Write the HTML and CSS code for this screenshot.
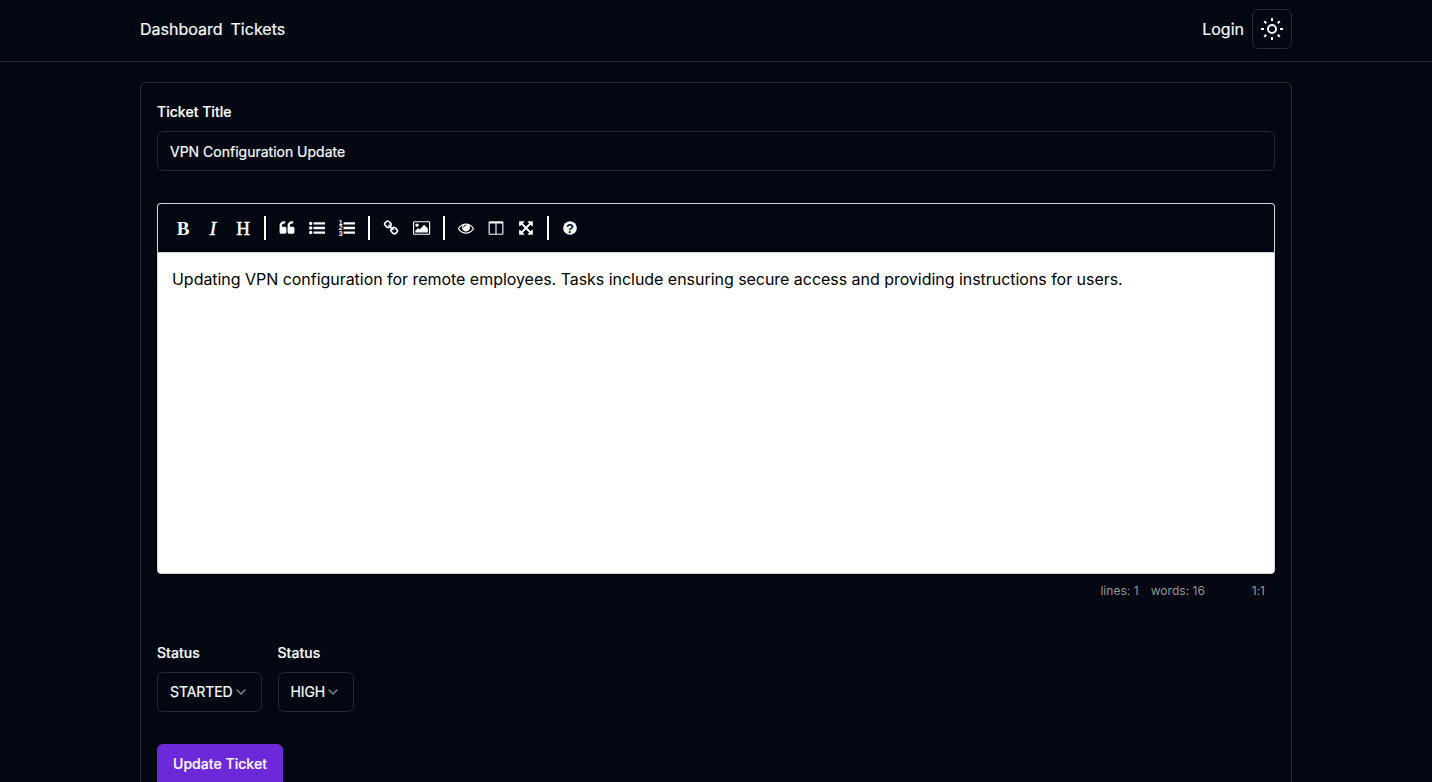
FILE: index.html
```html
<!DOCTYPE html>
<html lang="en">
<head>
<meta charset="utf-8">
<title>Edit Ticket</title>
<link rel="stylesheet" href="styles.css">
</head>
<body>
<nav class="navbar">
  <div class="nav-inner">
    <div class="nav-links"><a>Dashboard</a><a>Tickets</a></div>
    <div class="nav-links">
      <a>Login</a>
      <button class="theme-toggle" aria-label="Toggle theme">
        <svg width="24" height="24" viewBox="0 0 24 24" fill="none" stroke="currentColor" stroke-width="2"><circle cx="12" cy="12" r="4"/><path d="M12 1v3M12 20v3M1 12h3M20 12h3M4.2 4.2l2.1 2.1M17.7 17.7l2.1 2.1M4.2 19.8l2.1-2.1M17.7 6.3l2.1-2.1"/></svg>
      </button>
    </div>
  </div>
</nav>
<main class="card">
  <label class="label">Ticket Title</label>
  <input class="input" value="VPN Configuration Update">
  <section class="editor">
    <div class="toolbar">
      <button class="tool letter bold">B</button>
      <button class="tool letter italic">I</button>
      <button class="tool letter">H</button>
      <i class="separator"></i>
      <button class="tool"><svg viewBox="0 0 1792 1792"><path d="M832 960v384q0 80-56 136t-136 56h-384q-80 0-136-56t-56-136v-704q0-104 40.500-198.500t109.500-163.500 163.500-109.500 198.500-40.500h64q26 0 45 19t19 45v128q0 26-19 45t-45 19h-64q-106 0-181 75t-75 181v32q0 40 28 68t68 28h224q80 0 136 56t56 136zm896 0v384q0 80-56 136t-136 56h-384q-80 0-136-56t-56-136v-704q0-104 40.500-198.500t109.500-163.500 163.500-109.500 198.500-40.500h64q26 0 45 19t19 45v128q0 26-19 45t-45 19h-64q-106 0-181 75t-75 181v32q0 40 28 68t68 28h224q80 0 136 56t56 136z"/></svg></button>
      <button class="tool"><svg viewBox="0 0 1792 1792"><circle cx="192" cy="384" r="192"/><circle cx="192" cy="896" r="192"/><circle cx="192" cy="1408" r="192"/><rect x="512" y="256" width="1280" height="256" rx="32"/><rect x="512" y="768" width="1280" height="256" rx="32"/><rect x="512" y="1280" width="1280" height="256" rx="32"/></svg></button>
      <button class="tool"><svg viewBox="0 0 1792 1792"><text class="list-digit" x="-20" y="520">1</text><text class="list-digit" x="-20" y="1160">2</text><text class="list-digit" x="-20" y="1790">3</text><rect x="512" y="256" width="1280" height="256" rx="32"/><rect x="512" y="768" width="1280" height="256" rx="32"/><rect x="512" y="1280" width="1280" height="256" rx="32"/></svg></button>
      <i class="separator"></i>
      <button class="tool"><svg viewBox="0 0 1792 1792"><path d="M1520 1216q0-40-28-68l-208-208q-28-28-68-28-42 0-72 32 3 3 19 18.500t21.500 21.500 15 19 13 25.500 3.500 27.500q0 40-28 68t-68 28q-15 0-27.500-3.500t-25.500-13-19-15-21.500-21.500-18.500-19q-33 31-33 73 0 40 28 68l206 207q27 27 68 27 40 0 68-26l147-146q28-28 28-67zm-703-705q0-40-28-68l-206-207q-28-28-68-28-39 0-68 27l-147 146q-28 28-28 67 0 40 28 68l208 208q27 27 68 27 42 0 72-31-3-3-19-18.500t-21.500-21.500-15-19-13-25.500-3.500-27.500q0-40 28-68t68-28q15 0 27.500 3.500t25.500 13 19 15 21.500 21.500 18.500 19q33-31 33-73zm895 705q0 120-85 203l-147 146q-83 83-203 83-121 0-204-85l-206-207q-83-83-83-203 0-123 88-209l-88-88q-86 88-208 88-120 0-204-84l-208-208q-84-84-84-204t85-203l147-146q83-83 203-83 121 0 204 85l206 207q83 83 83 203 0 123-88 209l88 88q86-88 208-88 120 0 204 84l208 208q84 84 84 204z"/></svg></button>
      <button class="tool wide"><svg viewBox="-64 0 1920 1792"><path d="M576 576q0 80-56 136t-136 56-136-56-56-136 56-136 136-56 136 56 56 136zm1024 384v448h-1408v-192l320-320 160 160 512-512zm96-704h-1600q-13 0-22.500 9.500t-9.500 22.500v1216q0 13 9.500 22.500t22.500 9.500h1600q13 0 22.500-9.500t9.500-22.500v-1216q0-13-9.500-22.500t-22.500-9.500zm160 32v1216q0 66-47 113t-113 47h-1600q-66 0-113-47t-47-113v-1216q0-66 47-113t113-47h1600q66 0 113 47t47 113z"/></svg></button>
      <i class="separator"></i>
      <button class="tool"><svg viewBox="0 0 1792 1792"><path d="M1664 960q-152-236-381-353 61 104 61 225 0 185-131.500 316.500t-316.500 131.500-316.500-131.500-131.500-316.500q0-121 61-225-229 117-381 353 133 205 333.500 326.500t434.500 121.500 434.500-121.500 333.500-326.500zm-720-384q0-20-14-34t-34-14q-125 0-214.500 89.500t-89.500 214.500q0 20 14 34t34 14 34-14 14-34q0-86 61-147t147-61q20 0 34-14t14-34zm848 384q0 34-20 69-140 230-376.500 368.500t-499.500 138.500-499.500-139-376.500-368q-20-35-20-69t20-69q140-229 376.500-368t499.500-139 499.500 139 376.500 368q20 35 20 69z"/></svg></button>
      <button class="tool"><svg viewBox="0 0 1792 1792"><path d="M224 1536h608v-1152h-640v1120q0 13 9.500 22.500t22.500 9.500zm1376-32v-1120h-640v1152h608q13 0 22.500-9.500t9.500-22.500zm128-1216v1216q0 66-47 113t-113 47h-1344q-66 0-113-47t-47-113v-1216q0-66 47-113t113-47h1344q66 0 113 47t47 113z"/></svg></button>
      <button class="tool"><svg viewBox="0 0 1792 1792"><path d="M1411 541l-355 355 355 355 144-144q29-31 70-14 39 17 39 59v448q0 26-19 45t-45 19h-448q-42 0-59-40-17-39 14-69l144-144-355-355-355 355 144 144q31 30 14 69-17 40-59 40h-448q-26 0-45-19t-19-45v-448q0-42 40-59 39-17 69 14l144 144 355-355-355-355-144 144q-19 19-45 19-12 0-24-5-40-17-40-59v-448q0-26 19-45t45-19h448q42 0 59 40 17 39-14 69l-144 144 355 355 355-355-144-144q-31-30-14-69 17-40 59-40h448q26 0 45 19t19 45v448q0 42-39 59-13 5-25 5-26 0-45-19z"/></svg></button>
      <i class="separator"></i>
      <button class="tool"><svg viewBox="0 0 1792 1792"><circle cx="896" cy="896" r="768"/><text class="help-mark" x="896" y="1400">?</text></svg></button>
    </div>
    <div class="document">Updating VPN configuration for remote employees. Tasks include ensuring secure access and providing instructions for users.</div>
    <div class="statusbar"><span>lines: 1</span><span>words: 16</span><span class="cursor-pos">1:1</span></div>
  </section>
  <div class="selects">
    <div><label class="label">Status</label>
      <button class="select">STARTED<svg width="16" height="16" viewBox="0 0 24 24"><path d="m6 9 6 6 6-6"/></svg></button></div>
    <div><label class="label">Status</label>
      <button class="select">HIGH<svg width="16" height="16" viewBox="0 0 24 24"><path d="m6 9 6 6 6-6"/></svg></button></div>
  </div>
  <button class="submit">Update Ticket</button>
</main>
</body>
</html>
```
FILE: styles.css
```css
* { box-sizing: border-box; }
html { overflow: hidden; }
body {
  margin: 0;
  height: 782px;
  overflow: hidden;
  background: #030711;
  color: #f9fafb;
  font: 16px/24px Inter, sans-serif;
}
button, input { font: inherit; color: inherit; margin: 0; }
.navbar { height: 62px; border-bottom: 1px solid #1f2937; }
.nav-inner {
  width: 1152px;
  margin: 0 auto;
  padding-top: 9px;
  display: flex;
  justify-content: space-between;
}
.nav-links { display: flex; align-items: center; gap: 8px; height: 40px; -webkit-text-stroke: 0.2px; }
.theme-toggle {
  width: 40px;
  height: 40px;
  padding: 0;
  display: grid;
  place-items: center;
  background: none;
  border: 1px solid #1f2937;
  border-radius: 6px;
}
.card {
  width: 1152px;
  height: 700px;
  margin: 20px auto 0;
  padding: 16px 16px 0;
  border: 1px solid #1f2937;
  border-bottom: 0;
  border-radius: 6px 6px 0 0;
}
.label {
  display: block;
  height: 32px;
  font-size: 14px;
  line-height: 26px;
  font-weight: 500;
  letter-spacing: 0.03px;
  -webkit-text-stroke: 0.2px;
}
.input {
  display: block;
  width: 100%;
  height: 40px;
  padding: 0 12px;
  background: transparent;
  border: 1px solid #1f2937;
  border-radius: 6px;
  font-size: 14px;
  -webkit-text-stroke: 0.2px;
}
.editor { margin-top: 32px; }
.toolbar {
  display: flex;
  align-items: center;
  height: 49px;
  padding: 0 10px;
  border: 1px solid #ced4da;
  border-bottom: 0;
  border-radius: 4px 4px 0 0;
}
.tool {
  width: 30px;
  height: 30px;
  padding: 0;
  display: grid;
  place-items: center;
  background: none;
  border: 0;
}
.tool.wide { width: 31px; }
.tool svg { height: 16px; fill: currentColor; display: block; overflow: visible; }
.letter { font: 19px/30px "Liberation Serif", serif; -webkit-text-stroke: 0.5px; padding-top: 1px; }
.bold { font-weight: 700; -webkit-text-stroke: 0; }
.italic { font-style: italic; }
.separator { width: 2px; height: 24px; margin: 0 6px; background: #f9fafb; }
.list-digit { font: 700 780px "Liberation Sans", sans-serif; }
.help-mark { font: 700 1450px "Liberation Sans", sans-serif; text-anchor: middle; fill: #030711; }
.document {
  height: 322px;
  padding: 14px;
  background: #fff;
  color: #000;
  border: 1px solid #ced4da;
  border-radius: 0 0 4px 4px;
  letter-spacing: -0.037px;
}
.statusbar {
  display: flex;
  justify-content: flex-end;
  gap: 12px;
  padding: 8px 10px;
  color: #959694;
  font-size: 12px;
  line-height: 18px;
  letter-spacing: 0.04px;
}
.cursor-pos { min-width: 48px; text-align: right; }
.selects { display: flex; gap: 16px; margin-top: 32px; }
.select {
  height: 40px;
  padding: 0 12px;
  display: flex;
  align-items: center;
  background: none;
  border: 1px solid #1f2937;
  border-radius: 6px;
  font-size: 14px;
  letter-spacing: -0.08px;
  -webkit-text-stroke: 0.2px;
}
.select svg { fill: none; stroke: #7f8794; stroke-width: 2; stroke-linecap: round; stroke-linejoin: round; }
.submit {
  height: 40px;
  margin-top: 32px;
  padding: 0 16px;
  background: #6d28d9;
  border: 0;
  border-radius: 6px 6px 0 0;
  font-size: 14px;
  font-weight: 500;
  letter-spacing: 0.04px;
  -webkit-text-stroke: 0.2px;
}
```
